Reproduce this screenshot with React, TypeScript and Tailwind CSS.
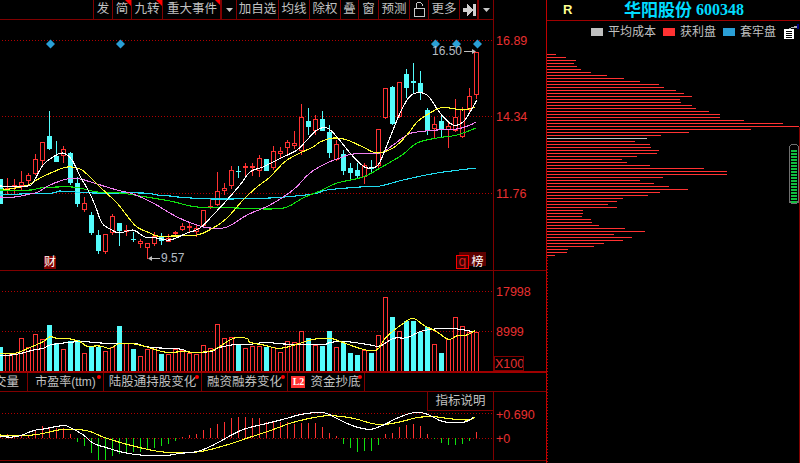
import React from "react";

type P = [number, number];
const RED = "#ff3232";
const CYAN = "#54fcfc";
const DARK = "#800000";

// [high, bodyTop, bodyBottom, low, colour]; one bar every 7px
const candles: [number, number, number, number, string][] = [
  [179,179,204,204,"c"],[178,188,190,195,"r"],[179,185,187,194,"r"],[171,182,186,190,"r"],[173,175,181,185,"r"],
  [154,159,174,175,"r"],[142,142,161,166,"r"],[111,136,149,150,"c"],[141,156,162,162,"c"],[146,149,156,163,"r"],
  [152,153,183,185,"c"],[177,183,204,207,"c"],[197,203,210,212,"r"],[212,215,233,235,"c"],[230,235,251,254,"c"],
  [234,234,252,254,"r"],[214,216,233,235,"r"],[223,223,231,246,"c"],[225,230,231,236,"r"],[232,239,240,242,"c"],
  [239,241,244,248,"r"],[243,243,248,259,"r"],[232,236,244,246,"r"],[233,236,241,245,"c"],[234,238,242,242,"r"],
  [231,232,233,235,"r"],[223,226,230,231,"r"],[222,226,228,232,"r"],[224,228,232,237,"r"],[210,210,226,227,"r"],
  [198,206,208,209,"r"],[172,191,205,206,"r"],[183,188,191,195,"r"],[166,170,186,189,"r"],[166,171,172,178,"c"],
  [163,166,168,177,"r"],[163,166,168,176,"r"],[155,158,171,177,"r"],[159,159,171,171,"c"],[146,151,168,170,"r"],
  [147,151,154,158,"r"],[140,142,148,156,"r"],[131,143,146,149,"r"],[104,117,151,155,"r"],[108,121,127,135,"c"],
  [115,119,131,135,"r"],[111,119,131,131,"c"],[125,132,153,158,"c"],[140,144,160,161,"r"],[150,154,171,175,"c"],
  [163,168,173,179,"c"],[163,170,176,178,"c"],[163,165,177,184,"r"],[160,168,169,172,"c"],[129,129,166,170,"r"],
  [88,88,118,119,"r"],[86,87,124,125,"c"],[82,82,117,118,"r"],[69,74,88,98,"c"],[63,81,83,94,"c"],
  [71,83,93,100,"c"],[108,110,130,135,"c"],[117,124,129,138,"r"],[115,121,130,137,"c"],[122,126,130,148,"r"],
  [99,117,131,132,"r"],[107,109,137,138,"r"],[88,96,110,112,"r"],[52,52,95,99,"r"],
];

// [top, colour]; baseline 371
const vols: [number, string][] = [
  [347,"c"],[353,"r"],[353,"r"],[338,"r"],[347,"r"],[334,"r"],[339,"r"],[325,"c"],[343,"c"],[349,"r"],
  [341,"c"],[340,"c"],[353,"r"],[347,"c"],[347,"c"],[351,"r"],[347,"r"],[326,"c"],[343,"r"],[349,"c"],
  [356,"r"],[349,"r"],[347,"r"],[354,"c"],[354,"r"],[349,"r"],[350,"r"],[353,"r"],[354,"r"],[345,"r"],
  [348,"r"],[324,"r"],[338,"r"],[337,"r"],[345,"c"],[348,"r"],[346,"r"],[346,"r"],[347,"c"],[347,"r"],
  [352,"r"],[341,"r"],[342,"r"],[331,"r"],[338,"c"],[345,"r"],[346,"c"],[331,"c"],[347,"r"],[343,"c"],
  [353,"c"],[355,"c"],[350,"r"],[353,"c"],[335,"r"],[297,"r"],[317,"c"],[331,"r"],[321,"c"],[321,"c"],
  [332,"c"],[327,"c"],[344,"r"],[353,"c"],[339,"r"],[317,"r"],[326,"r"],[332,"r"],[332,"r"],
];

const ma5: P[] = [[0,186],[28,186],[35,179],[43,165],[53,157],[63,153],[72,160],[80,176],[88,190],[95,205],[102,223],[112,230],[120,233],[133,230],[145,237],[157,238],[170,240],[187,233],[200,228],[213,215],[227,200],[240,185],[250,172],[263,167],[273,162],[283,157],[297,150],[307,140],[317,130],[327,128],[337,137],[350,153],[363,166],[370,168],[378,165],[385,150],[393,130],[403,107],[413,94],[427,95],[440,113],[453,125],[463,122],[470,112],[477,100]];
const ma10: P[] = [[3,189],[10,189],[28,185],[40,178],[53,172],[67,167],[80,169],[90,177],[100,187],[117,203],[128,217],[137,227],[150,233],[157,236],[173,236],[197,235],[213,228],[227,218],[243,200],[257,187],[270,177],[287,160],[313,147],[320,142],[333,138],[347,140],[363,147],[377,153],[393,148],[407,135],[417,122],[430,113],[440,108],[450,108],[463,110],[475,107]];
const ma20: P[] = [[0,197],[15,197],[30,194],[38,192],[50,185],[67,179],[80,179],[97,184],[117,190],[133,194],[153,203],[177,217],[197,225],[210,228],[227,227],[247,215],[270,205],[293,190],[310,173],[327,163],[343,157],[353,154],[380,153],[393,145],[407,135],[417,132],[437,130],[457,129],[470,125],[476,122]];
const ma30: P[] = [[0,190],[32,190],[40,188],[73,187],[97,192],[120,193],[140,196],[170,201],[197,207],[237,208],[270,209],[287,207],[303,198],[320,191],[337,183],[363,177],[380,168],[402,155],[417,143],[437,138],[457,135],[476,128]];
const ma60: P[] = [[0,195],[20,194],[53,193],[60,191],[93,193],[143,193],[157,195],[170,196],[178,197],[213,199],[270,198],[313,194],[327,190],[360,187],[380,186],[403,180],[437,173],[476,168]];

const z7 = (a: P[]): P[] => a.map(([x, y]) => [x / 3, 310 + y / 3]);
const z8 = (a: P[]): P[] => a.map(([x, y]) => [270 + x / 3, 310 + y / 3]);
const v1 = (a: P[]): P[] => a.map(([x, y]) => [x / 3, 290 + y / 3]);
const v2 = (a: P[]): P[] => a.map(([x, y]) => [250 + x / 3, 290 + y / 3]);

const volWhite = [...v1([[0,197],[50,193],[100,180],[130,175],[150,165],[200,158],[250,155],[320,160],[400,160],[450,172],[540,177],[570,187],[630,185],[660,172],[710,163],[750,163]]), ...v2([[50,157],[100,162],[220,163],[240,157],[290,155],[350,163],[390,168],[430,145],[470,143],[520,122],[600,115],[670,125]])];
const volYellow = [...v1([[0,190],[45,190],[100,168],[130,155],[150,140],[170,145],[200,145],[240,155],[260,168],[300,168],[330,175],[360,160],[410,163],[460,177],[500,187],[550,185],[590,187],[640,180],[700,145],[740,145],[750,157]]), ...v2([[40,165],[90,175],[150,160],[190,148],[240,145],[280,158],[340,178],[380,180],[410,140],[460,100],[490,85],[520,105],[560,125],[595,148],[620,138],[650,135],[675,122]])];

const macdWhite = [...z7([[0,380],[50,380],[100,362],[130,357],[190,347],[215,355],[250,375],[280,400],[320,413],[360,425],[420,435],[500,436],[540,430],[590,425],[640,405],[700,372],[740,355],[810,338]]), ...z8([[50,325],[100,312],[160,308],[200,325],[250,348],[300,358],[340,345],[380,325],[430,308],[470,312],[520,335],[580,337],[610,322]])];
const macdYellow = [...z7([[0,375],[55,378],[120,372],[190,358],[260,362],[320,385],[400,408],[480,425],[550,428],[610,423],[680,405],[740,385],[810,362]]), ...z8([[60,340],[120,325],[180,317],[250,325],[320,343],[380,338],[440,323],[490,320],[530,325],[590,330],[615,322]])];

// top of each MACD stick in 3x crop units, 385 is the zero line
const macdBars = [372,372,375,375,378,362,348,350,353,355,372,395,408,428,450,450,437,433,428,425,425,420,413,408,402,392,381,376,372,361,353,342,335,323,321,321,323,323,335,335,335,337,343,340,338,340,350,369,378,402,413,425,423,423,405,372,369,352,345,342,348,372,387,398,404,404,402,392,367];

const dist = [556,566,576,574,577,581,591,607,624,640,659,664,676,684,692,680,681,692,696,709,720,720,744,783,799,751,689,661,647,635,650,651,659,657,637,622,627,650,704,727,727,663,640,654,669,688,660,648,623,617,608,617,583,583,582,591,592,599,625,645,614,632,623,604,594,568,567,555];

// Catmull-Rom resampling so the averages read as curves
const smooth = (pts: P[]): P[] => {
  const out: P[] = [];
  for (let i = 0; i < pts.length - 1; i++) {
    const p0 = pts[Math.max(i - 1, 0)];
    const p1 = pts[i];
    const p2 = pts[i + 1];
    const p3 = pts[Math.min(i + 2, pts.length - 1)];
    for (let s = 0; s < 4; s++) {
      const t = s / 4;
      const f = (a: number, b: number, c: number, d: number) =>
        0.5 * (2 * b + (c - a) * t + (2 * a - 5 * b + 4 * c - d) * t * t + (3 * b - a - 3 * c + d) * t * t * t);
      out.push([f(p0[0], p1[0], p2[0], p3[0]), f(p0[1], p1[1], p2[1], p3[1])]);
    }
  }
  out.push(pts[pts.length - 1]);
  return out;
};

const Line = ({ pts, color }: { pts: P[]; color: string }) => (
  <polyline points={smooth(pts).map((p) => p.join(",")).join(" ")} fill="none" stroke={color} strokeWidth={1.1} shapeRendering="crispEdges" />
);
const Dotted = ({ y }: { y: number }) => (
  <line x1={2} x2={493} y1={y + 0.5} y2={y + 0.5} stroke="#b00000" strokeDasharray="1 2" shapeRendering="crispEdges" />
);
const Label = ({ x, y, children }: { x: number; y: number; children: React.ReactNode }) => (
  <text x={x} y={y} fill="#e83030" fontSize={12.5}>{children}</text>
);
const Diamond = ({ x }: { x: number }) => (
  <polygon points={`${x + 0.5},39.5 ${x + 5},44 ${x + 0.5},48.5 ${x - 4},44`} fill="#2a9fd6" />
);

const Tool = ({ w, children, flag, heavy }: { w: string; children: React.ReactNode; flag?: boolean; heavy?: boolean }) => (
  <div className={`relative flex items-center justify-center border-l h-full text-[12.5px] text-[#c0c0c0] ${w} ${heavy ? "border-[#800000] outline outline-1 outline-[#800000]" : "border-[#800000]"}`}>
    {children}
    {flag && <span className="absolute right-0 top-0 w-0 h-0 border-l-[6px] border-l-transparent border-t-[6px] border-t-[#ff0000]" />}
  </div>
);

const Caret = () => (
  <svg width="9" height="6" viewBox="0 0 9 6"><polygon points="1,1 8,1 4.5,5" fill="#c8c8c8" /></svg>
);

const Tab = ({ w, children, dot, end }: { w: string; children: React.ReactNode; dot?: boolean; end?: boolean }) => (
  <div className={`relative flex items-center overflow-hidden shrink-0 h-full border-r border-[#800000] text-[12.5px] text-[#c0c0c0] whitespace-nowrap ${w} ${end ? "justify-end pr-[8px]" : "justify-center"}`}>
    {children}
    {dot && <span className="absolute right-[2px] top-[2px] w-[4px] h-[4px] rounded-full bg-[#ff0000]" />}
  </div>
);

const Legend = ({ color, text, w }: { color: string; text: string; w: string }) => (
  <div className={`flex items-center ${w}`}>
    <span className={`w-[12px] h-[8px] mr-[5px] ${color}`} />
    <span className="text-[12px] text-[#c0c0c0]">{text}</span>
  </div>
);

export default function App() {
  return (
    <div className="w-[800px] h-[463px] bg-black overflow-hidden flex font-['Liberation_Sans','Noto_Sans_CJK_SC',sans-serif]">
      <div className="w-[546px] h-full flex flex-col shrink-0">
        {/* toolbar */}
        <div className="h-[20px] w-[493px] flex justify-end border-b border-[#800000] shrink-0">
          <Tool w="w-[19px]">发</Tool>
          <Tool w="w-[19px]" flag>简</Tool>
          <Tool w="w-[31px]" flag>九转</Tool>
          <Tool w="w-[59px]" flag>重大事件</Tool>
          <Tool w="w-[15px]" heavy><Caret /></Tool>
          <Tool w="w-[42px]">加自选</Tool>
          <Tool w="w-[31px]">均线</Tool>
          <Tool w="w-[31px]">除权</Tool>
          <Tool w="w-[18px]">叠</Tool>
          <Tool w="w-[20px]">窗</Tool>
          <Tool w="w-[31px]">预测</Tool>
          <Tool w="w-[19px]">
            <svg width="12" height="15" viewBox="0 0 12 15" fill="none" stroke="#c8c8c8" shapeRendering="crispEdges">
              <path d="M3.5 6V2.5Q3.5 .5 6 .5T9.5 2.5V4" />
              <rect x="1" y="6.5" width="10" height="7.5" />
            </svg>
          </Tool>
          <Tool w="w-[31px]">更多</Tool>
          <Tool w="w-[19px]">
            <svg width="13" height="12" viewBox="0 0 13 12" fill="#d0d0d0" shapeRendering="crispEdges">
              <path d="M0 4H4V0L10 6L4 12V8H0Z" />
              <rect x="10" y="0" width="3" height="12" />
            </svg>
          </Tool>
          <Tool w="w-[15px]" heavy><Caret /></Tool>
        </div>

        {/* price chart */}
        <div className="relative h-[251px] shrink-0 border-b border-[#800000]">
          <svg width="546" height="250" viewBox="0 20 546 250" className="block font-['Liberation_Sans',sans-serif]">
            <line x1={493.5} x2={493.5} y1={20} y2={270} stroke={DARK} shapeRendering="crispEdges" />
            <Dotted y={40} /><Dotted y={116} /><Dotted y={193} />
            {candles.map(([h, t, b, l, c], i) => {
              const x = i * 7;
              const col = c === "r" ? RED : CYAN;
              return (
                <g key={i} shapeRendering="crispEdges">
                  <line x1={x + 0.5} x2={x + 0.5} y1={h} y2={l} stroke={col} />
                  {c === "r" ? (
                    <rect x={x - 1.5} y={t + 0.5} width={4} height={Math.max(b - t - 1, 1)} fill="#000" stroke={col} />
                  ) : (
                    <rect x={x - 2} y={t} width={5} height={b - t} fill={col} />
                  )}
                </g>
              );
            })}
            <Line pts={ma60} color="#22dcf0" />
            <Line pts={ma30} color="#10e010" />
            <Line pts={ma20} color="#f080f0" />
            <Line pts={ma10} color="#ffff30" />
            <Line pts={ma5} color="#ffffff" />
            <Diamond x={50} /><Diamond x={120} /><Diamond x={435} /><Diamond x={456} /><Diamond x={477} />
            <text x={432} y={55} fill="#b4bcc4" fontSize={12}>16.50</text>
            <line x1={464} x2={474} y1={51.5} y2={51.5} stroke="#c0c0c0" shapeRendering="crispEdges" />
            <polygon points="472,49 476,51.5 472,54" fill="#c0c0c0" />
            <text x={161} y={262} fill="#b4bcc4" fontSize={12}>9.57</text>
            <line x1={150} x2={160} y1={258.5} y2={258.5} stroke="#c0c0c0" shapeRendering="crispEdges" />
            <polygon points="152,256 148,258.5 152,261" fill="#c0c0c0" />
            <Label x={496} y={45}>16.89</Label>
            <Label x={496} y={121}>14.34</Label>
            <Label x={496} y={198}>11.76</Label>
          </svg>
          <span className="absolute left-[44px] top-[236px] w-[12px] h-[13px] bg-[#800000] text-white text-[12px] leading-[13px] text-center">财</span>
          <span className="absolute left-[459px] top-[232px] w-[13px] h-[14px] bg-[#5c0000]" />
          <span className="absolute left-[456px] top-[235px] w-[13px] h-[14px] bg-[#3a0000] border border-[#ff0000] text-[#d02020] text-[14px] leading-[10px] text-center">q</span>
          <span className="absolute left-[472px] top-[232px] w-[14px] h-[14px] bg-[#5c0000]" />
          <span className="absolute left-[471px] top-[236px] w-[13px] h-[13px] text-white text-[12px] leading-[13px] text-center">榜</span>
        </div>

        {/* volume */}
        <div className="relative h-[100px] shrink-0">
          <svg width="546" height="100" viewBox="0 271 546 100" className="block font-['Liberation_Sans',sans-serif]">
            <line x1={493.5} x2={493.5} y1={271} y2={371} stroke={DARK} shapeRendering="crispEdges" />
            <Dotted y={291} /><Dotted y={331} />
            {vols.map(([t, c], i) => {
              const x = i * 7;
              return c === "r" ? (
                <rect key={i} x={x - 1.5} y={t + 0.5} width={4} height={371 - t} fill="#000" stroke={RED} shapeRendering="crispEdges" />
              ) : (
                <rect key={i} x={x - 2} y={t} width={5} height={371 - t} fill={CYAN} shapeRendering="crispEdges" />
              );
            })}
            <Line pts={volWhite} color="#ffffff" />
            <Line pts={volYellow} color="#ffff30" />
            <Label x={496} y={296}>17998</Label>
            <Label x={496} y={336}>8999</Label>
          </svg>
          <span className="absolute left-[494px] top-[85px] w-[30px] h-[15px] border border-[#800000] text-[#e83030] text-[12.5px] leading-[14px] text-center overflow-hidden">X100</span>
        </div>

        {/* tabs */}
        <div className="h-[21px] flex border-t-2 border-b border-t-[#a00000] border-b-[#800000] shrink-0">
          <Tab w="w-[28px]" end>成交量</Tab>
          <Tab w="w-[76px]" dot><span className="text-[12px]">市盈率(ttm)</span></Tab>
          <Tab w="w-[98px]" dot>陆股通持股变化</Tab>
          <Tab w="w-[86px]" dot>融资融券变化</Tab>
          <Tab w="w-[77px]" dot>
            <span className="w-[14px] h-[12px] mr-[5px] bg-[#ff3232] text-white text-[10px] leading-[12px] text-center font-bold font-['Liberation_Serif',serif]">L2</span>
            资金抄底
          </Tab>
        </div>

        {/* MACD */}
        <div className="relative h-[69px] shrink-0 border-b border-[#800000]">
          <svg width="546" height="68" viewBox="0 392 546 68" className="block font-['Liberation_Sans',sans-serif]">
            <line x1={493.5} x2={493.5} y1={392} y2={460} stroke={DARK} shapeRendering="crispEdges" />
            <Dotted y={413} /><Dotted y={438} />
            {macdBars.map((z, i) => {
              const y = 310 + z / 3;
              const x = i * 7 + 0.5;
              return <line key={i} x1={x} x2={x} y1={Math.round(y)} y2={438} stroke={z > 385 ? "#10e010" : RED} shapeRendering="crispEdges" />;
            })}
            <Line pts={macdYellow} color="#ffff30" />
            <Line pts={macdWhite} color="#ffffff" />
            <Label x={496} y={419}>+0.690</Label>
            <Label x={496} y={443}>+0</Label>
          </svg>
          <div className="absolute left-[427px] top-0 w-[66px] h-[19px] border-l border-b border-[#800000] bg-black flex items-center justify-center text-[12.5px] text-[#c0c0c0]">指标说明</div>
        </div>
      </div>

      {/* right panel */}
      <div className="relative w-[254px] h-full border-l border-[#c00000] flex flex-col">
        <div className="h-[21px] flex items-center border-b border-[#a00000] pl-[16px] shrink-0">
          <span className="w-[61px] text-[13px] font-bold text-[#ffff90]">R</span>
          <span className="text-[17px] font-bold leading-none text-[#00dcff] whitespace-nowrap">华阳股份</span>
          <span className="ml-[4px] text-[16px] font-bold leading-none text-[#00dcff] font-['Liberation_Serif',serif]">600348</span>
        </div>
        <div className="h-[22px] flex items-center pl-[44px] shrink-0">
          <Legend color="bg-[#c0c0c0]" text="平均成本" w="w-[72px]" />
          <Legend color="bg-[#ff3232]" text="获利盘" w="w-[60px]" />
          <Legend color="bg-[#2a9fd6]" text="套牢盘" w="w-[61px]" />
          <svg width="13" height="13" viewBox="0 0 13 13" className="shrink-0" shapeRendering="crispEdges">
            <rect x="0" y="3" width="10" height="10" fill="#fff" />
            <path d="M2 5H8M2 7H8M2 9H8M2 11H8" stroke="#000" />
            <path d="M4 3L11 0H13V2H9Z" fill="#b0b0b0" />
          </svg>
        </div>
        <svg width="253" height="420" viewBox="547 43 253 420" className="block">
          {dist.map((end, i) => (
            <rect key={i} x={547} y={54 + i * 3} width={end - 547} height={1} fill={i === 28 ? "#c0c0c0" : RED} shapeRendering="crispEdges" />
          ))}
          <line x1={547.5} x2={547.5} y1={257} y2={463} stroke="#c00000" strokeDasharray="1 2" shapeRendering="crispEdges" />
          <line x1={799.5} x2={799.5} y1={127} y2={463} stroke={DARK} shapeRendering="crispEdges" />
        </svg>
        <svg width="10" height="60" viewBox="0 0 10 60" className="absolute left-[242px] top-[144px]" shapeRendering="crispEdges">
          <path d="M.5 59V4Q.5 .5 4 .5H6Q9.5 .5 9.5 4V59" fill="none" stroke="#707070" />
          <path d="M1 57.5L3 59.5H7L9 57.5" fill="none" stroke="#707070" />
          {Array.from({ length: 18 }, (_, i) => (
            <rect key={i} x={2} y={6 + i * 3} width={6} height={2} fill="#10c040" />
          ))}
        </svg>
        <span className="absolute left-[250px] top-[24px] w-[2px] h-[5px] bg-[#000080]" />
      </div>
    </div>
  );
}
